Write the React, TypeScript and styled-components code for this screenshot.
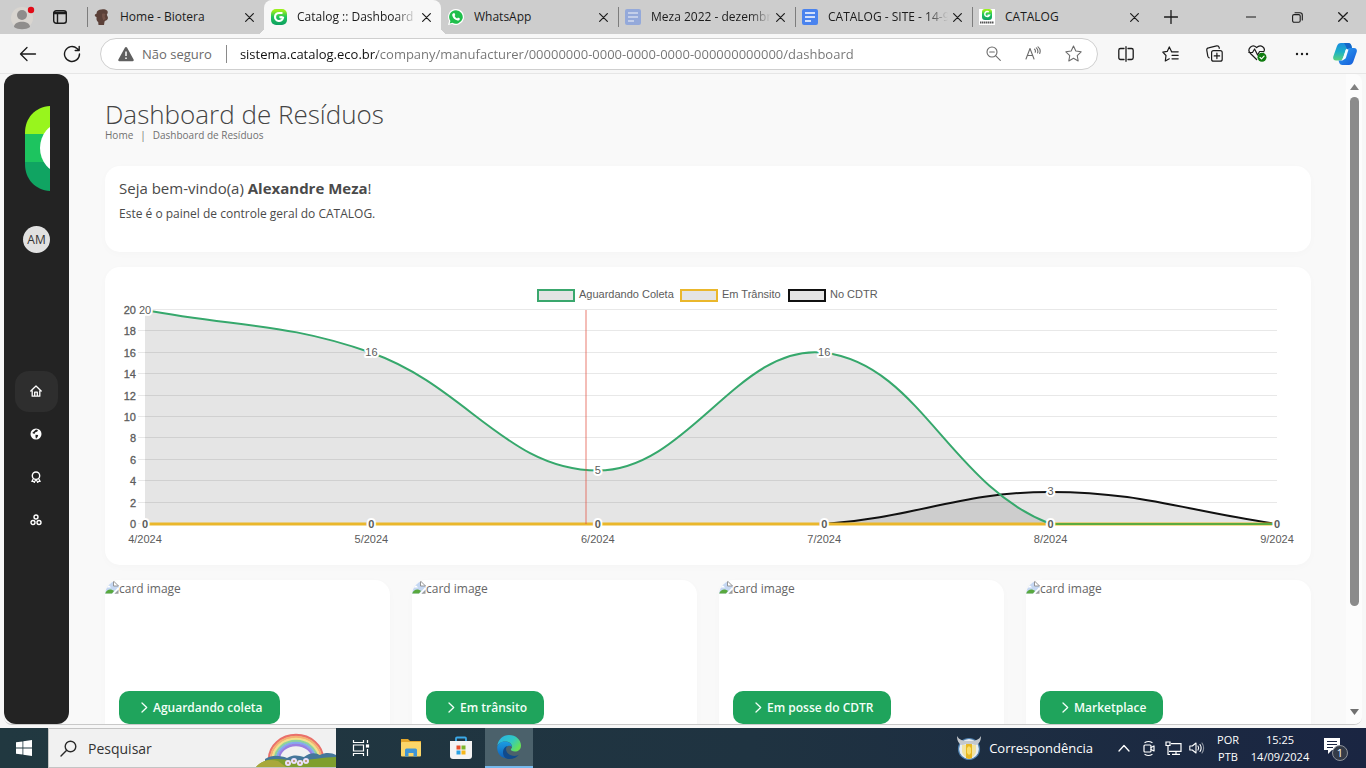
import React from 'react';
import styled, { createGlobalStyle } from 'styled-components';

const UI = '"Open Sans", "Noto Sans", sans-serif';
const CHART = '"Liberation Sans", Arial, sans-serif';

const GlobalStyle = createGlobalStyle`
  *, *::before, *::after { box-sizing: border-box; }
  html, body, #root { height: 100%; }
  body { margin: 0; background: #f7f7f7; font-family: ${UI}; overflow: hidden; }
  button, input { font: inherit; color: inherit; margin: 0; padding: 0; border: 0; background: none; }
  h1, h2, p { margin: 0; }
  a { color: inherit; text-decoration: none; }
  svg { display: block; flex: none; }
`;

const Screen = styled.div`
  display: flex;
  flex-direction: column;
  height: 100vh;
`;

/* ---------- browser tabs ---------- */
const TabStrip = styled.header`
  display: flex;
  height: 34px;
  flex: none;
  background: #cdcdcd;
  color: #1b1b1b;
`;
const StripTools = styled.div`
  display: flex;
  align-items: center;
  gap: 17px;
  width: 87px;
  padding-left: 10px;
  flex: none;
`;
const IconButton = styled.button<{ $w?: number }>`
  display: flex;
  align-items: center;
  justify-content: center;
  width: ${(p) => (p.$w ? `${p.$w}px` : 'auto')};
  flex: none;
`;
const TabItem = styled.div<{ $active?: boolean; $line?: boolean }>`
  display: flex;
  align-items: center;
  flex: 0 1 177px;
  min-width: 0;
  padding: 0 5px 0 6px;
  position: relative;
  background: ${(p) => (p.$active ? '#f7f7f7' : 'transparent')};
  border-radius: 8px 8px 0 0;
  &::before {
    content: '';
    width: 1px;
    height: 20px;
    margin-left: -6px;
    margin-right: 6px;
    background: ${(p) => (p.$line ? '#7d7d7d' : 'transparent')};
  }
  &::after {
    content: '';
    display: ${(p) => (p.$active ? 'block' : 'none')};
    position: absolute;
    left: -7px;
    right: -7px;
    bottom: 0;
    height: 7px;
    background:
      radial-gradient(circle at 0 0, transparent 7px, #f7f7f7 7px) left / 7px 7px no-repeat,
      radial-gradient(circle at 100% 0, transparent 7px, #f7f7f7 7px) right / 7px 7px no-repeat;
  }
`;
const TabLabel = styled.button`
  display: flex;
  align-items: center;
  gap: 10px;
  flex: 1;
  min-width: 0;
  font-size: 12px;
  line-height: 16px;
  text-align: left;
`;
const TabTitle = styled.span<{ $fade?: boolean }>`
  flex: 1;
  overflow: hidden;
  white-space: nowrap;
  mask-image: ${(p) => (p.$fade ? 'linear-gradient(90deg, #000 82%, transparent)' : 'none')};
`;
const WindowButtons = styled.div`
  display: flex;
  margin-left: auto;
`;

/* ---------- toolbar ---------- */
const Toolbar = styled.nav`
  display: flex;
  align-items: center;
  height: 40px;
  flex: none;
  background: #f7f7f7;
  border-bottom: 1px solid #e6e6e6;
  color: #1b1b1b;
`;
const NavGroup = styled.div`
  display: flex;
  width: 100px;
  padding-left: 6px;
  flex: none;
`;
const Address = styled.div`
  display: flex;
  align-items: center;
  flex: 1;
  height: 32px;
  padding: 0 4px 0 17px;
  background: #fff;
  border: 1px solid #cfcfcf;
  border-radius: 16px;
  font-size: 13px;
  line-height: 18px;
  color: #6b6b6b;
`;
const Secure = styled.button`
  display: flex;
  align-items: center;
  gap: 8px;
  padding-right: 14px;
  border-right: 1px solid #8a8a8a;
  white-space: nowrap;
`;
const UrlInput = styled.input`
  flex: 1;
  min-width: 0;
  margin-left: 13px;
  outline: none;
  background: linear-gradient(90deg, #111 137px, #737373 137px);
  background-clip: text;
  -webkit-text-fill-color: transparent;
`;
const ToolButtons = styled.div`
  display: flex;
  align-items: center;
  padding-left: 6px;
  flex: none;
`;

/* ---------- page ---------- */
const Viewport = styled.div`
  display: flex;
  flex: 1;
  min-height: 0;
  margin: 0 4px 3px;
  border-bottom: 1px solid #c9c9c9;
  border-radius: 8px;
  background: #f9f9f9;
  overflow: hidden;
`;
const Sidebar = styled.aside`
  display: flex;
  flex-direction: column;
  align-items: center;
  width: 65px;
  flex: none;
  padding-top: 32px;
  background: #232323;
  border-radius: 12px;
`;
const LogoLink = styled.a`
  padding-left: 2px;
`;
const Avatar = styled.button`
  width: 27px;
  height: 27px;
  margin-top: 35px;
  border-radius: 50%;
  background: #e1e1e1;
  color: #333;
  font-size: 12px;
  line-height: 27px;
`;
const SideNav = styled.nav`
  display: flex;
  flex-direction: column;
  gap: 2px;
  margin-top: 118px;
`;
const SideLink = styled.a<{ $active?: boolean }>`
  display: flex;
  align-items: center;
  justify-content: center;
  width: 43px;
  height: 41px;
  padding: 0 2px 2px 0;
  border-radius: 14px;
  color: #fff;
  background: ${(p) => (p.$active ? '#2e2e2e' : 'transparent')};
`;
const Main = styled.main`
  flex: 1;
  min-width: 0;
  padding: 25px 35px 0 36px;
  color: #4a4a4a;
  overflow: hidden;
`;
const Title = styled.h1`
  font-size: 26px;
  font-weight: 300;
  line-height: 30px;
  color: #444;
`;
const Crumbs = styled.nav`
  display: flex;
  gap: 7px;
  font-size: 10px;
  line-height: 12px;
  color: #707070;
`;
const Card = styled.section`
  background: #fff;
  border-radius: 15px;
  box-shadow: 0 2px 8px rgba(0, 0, 0, 0.02);
`;
const Welcome = styled(Card)`
  height: 86px;
  margin-top: 25px;
  padding: 12px 14px;
`;
const Greeting = styled.h2`
  font-size: 15px;
  font-weight: 400;
  line-height: 20px;
`;
const Intro = styled.p`
  margin-top: 6px;
  font-size: 12px;
  line-height: 20px;
`;
const ChartCard = styled(Card)`
  margin-top: 15px;
  overflow: hidden;
`;
const ChartSvg = styled.svg`
  width: 100%;
  height: auto;
  font-family: ${CHART};
  font-size: 11px;
  fill: #5c5c5c;
`;
const CardGrid = styled.div`
  display: grid;
  grid-template-columns: repeat(4, 1fr);
  gap: 22px;
  margin-top: 15px;
`;
const PhotoCard = styled(Card)`
  height: 200px;
  overflow: hidden;
`;
const Picture = styled.div`
  display: flex;
  height: 111px;
  font-size: 12px;
  line-height: 18px;
  color: #666;
`;
const CardButton = styled.button`
  display: flex;
  align-items: center;
  gap: 5px;
  height: 33px;
  margin-left: 14px;
  padding: 0 17px 0 22px;
  border-radius: 10px;
  background: #1fa45c;
  color: #f3fff8;
  font-size: 12px;
  font-weight: 600;
  white-space: nowrap;
`;
const ScrollTrack = styled.div`
  display: flex;
  flex-direction: column;
  align-items: center;
  width: 16px;
  flex: none;
  padding: 10px 0 9px;
  background: #fcfcfc;
`;
const Thumb = styled.div`
  width: 9px;
  flex: 0 1 509px;
  margin: 7px 0 auto;
  border-radius: 5px;
  background: #8b8b8b;
`;

/* ---------- taskbar ---------- */
const Taskbar = styled.footer`
  display: flex;
  align-items: stretch;
  height: 40px;
  flex: none;
  background: linear-gradient(90deg, #213840, #1f3341 55%, #1a2542);
  color: #fff;
`;
const TaskButton = styled.button<{ $active?: boolean; $w?: number }>`
  display: flex;
  align-items: center;
  justify-content: center;
  width: ${(p) => p.$w ?? 50}px;
  flex: none;
  background: ${(p) => (p.$active ? '#4b616b' : 'transparent')};
  border-bottom: ${(p) => (p.$active ? '2px solid #76b9ed' : '0')};
`;
const SearchBox = styled.label`
  display: flex;
  align-items: center;
  gap: 11px;
  width: 288px;
  flex: none;
  padding-left: 11px;
  background: #f1f1f1;
  border: 1px solid #c4c4c4;
  border-width: 1px 0 1px 1px;
  color: #2a2a2a;
  font-size: 14px;
`;
const SearchInput = styled.input`
  flex: 1;
  min-width: 0;
  outline: none;
  &::placeholder { color: #333; opacity: 1; }
`;
const Tray = styled.div`
  display: flex;
  align-items: center;
  margin-left: auto;
  padding-right: 7px;
`;
const News = styled.button`
  display: flex;
  align-items: center;
  gap: 8px;
  margin-right: 18px;
  font-size: 13px;
`;
const TrayText = styled.button<{ $w: number }>`
  width: ${(p) => p.$w}px;
  font-size: 11px;
  line-height: 17px;
  text-align: center;
`;

/* ---------- icons ---------- */
const line = { fill: 'none', stroke: 'currentColor', strokeLinecap: 'round', strokeLinejoin: 'round' } as const;

const CloseIcon = ({ size = 9 }: { size?: number }) => (
  <svg width={size} height={size} viewBox="0 0 10 10" {...line} strokeWidth="1.3"><path d="M.7.7l8.6 8.6M9.3.7L.7 9.3" /></svg>
);

const CatalogMark = ({ small }: { small?: boolean }) => (
  <svg width="16" height="16" viewBox="0 0 16 16">
    <defs><linearGradient id={small ? 'cms' : 'cm'} x1="0" y1="0" x2="0" y2="1"><stop offset="0.1" stopColor="#9af01c" /><stop offset="0.5" stopColor="#1fc45a" /><stop offset="1" stopColor="#0d9f62" /></linearGradient></defs>
    {small ? (
      <>
        <rect width="16" height="16" fill="#fff" />
        <rect x="3" width="10" height="11" rx="3" fill="url(#cms)" />
        <path d="M9.800 3A2.500 2.500 0 1 0 10.500 6.200H8.500" fill="none" stroke="#fff" strokeWidth="1.500" />
        <path d="M1 13.500h14" stroke="#555" strokeWidth="2" strokeDasharray="1.500 .5" />
      </>
    ) : (
      <>
        <rect width="16" height="16" rx="5" fill="url(#cm)" />
        <path d="M11.500 4H8a4 4 0 1 0 4 4.600C10.500 7.800 9.500 8 8.500 8.600" fill="none" stroke="#fff" strokeWidth="2.200" />
      </>
    )}
  </svg>
);

const MonkeyIcon = () => (
  <svg width="16" height="16" viewBox="0 0 16 16"><path d="M3 2.500C5 0 11-.3 13 1.500c1.300 1.300.7 3-.2 4.200.5 1.500 1.600 2.500.9 4.300-.7 1.700-3 1.400-3.200 2.800L10 16H4.500l-.3-3C2 11.500 2.600 9.500 2.500 8 .2 7.500.3 5 2.300 5z" fill="#5b4038" /><path d="M8 5c1.500-.8 3-.4 3.500.5L10.500 7l1.200 3-2.500 1.200L8.200 8z" fill="#735248" /></svg>
);
const WhatsIcon = () => (
  <svg width="16" height="16" viewBox="0 0 16 16"><path d="M8 0a8 8 0 1 1-3.900 15L0 16l1.100-4A8 8 0 0 1 8 0z" fill="#fff" /><path d="M8 1.200a6.800 6.800 0 1 1-3.600 12.600l-2.700.7.700-2.600A6.800 6.800 0 0 1 8 1.200z" fill="#1fbf4b" /><path d="M5.400 4.200l1-.1.9 2-.7 1c.6 1.100 1.300 1.800 2.500 2.300l.9-1 1.900 1c.1 1.300-1 2.200-2.300 2-2.800-.5-5-2.600-5.400-5.200-.1-.9.5-1.700 1.200-2z" fill="#fff" /></svg>
);
const DocIcon = ({ faded }: { faded?: boolean }) => (
  <svg width="16" height="16" viewBox="0 0 16 16"><rect width="16" height="16" rx="2" fill={faded ? '#94a9da' : '#4a83ee'} /><path d="M3 4h10M3 8h10M3 12h6" stroke={faded ? '#d4dbee' : '#fff'} strokeWidth="1.700" /></svg>
);
const ProfileIcon = () => (
  <svg width="26" height="28" viewBox="0 0 26 28"><circle cx="12" cy="15" r="11" fill="#d9d5d0" /><circle cx="12" cy="12" r="5" fill="#8f8d8c" /><path d="M4 24c0-7 16-7 16 0-4 3-12 3-16 0z" fill="#8f8d8c" /><circle cx="21" cy="7" r="3.200" fill="#e20a17" /></svg>
);
const WorkspaceIcon = () => (
  <svg width="14" height="14" viewBox="0 0 14 14" {...line} strokeWidth="1.400"><rect x=".7" y=".7" width="12.600" height="12.600" rx="2.500" /><path d="M1 2.500h12M1 3.500h12M4.500 4v9" /></svg>
);
const BackIcon = () => (
  <svg width="18" height="16" viewBox="0 0 18 16" {...line} strokeWidth="1.300"><path d="M16.500 8H1.500M8 1.500L1.500 8 8 14.500" /></svg>
);
const ReloadIcon = () => (
  <svg width="18" height="18" viewBox="0 0 18 18" {...line} strokeWidth="1.400"><path d="M16.500 9A7.500 7.500 0 1 1 14 3.400l2 1.900M16.200 1.500v4h-4" /></svg>
);
const WarnIcon = () => (
  <svg width="16" height="16" viewBox="0 0 16 16"><path d="M7 1.600c.4-.8 1.600-.8 2 0l6.600 12c.4.800 0 1.700-1 1.700H1.400c-1 0-1.400-.9-1-1.700z" fill="#5f5f5f" /><path d="M8 5.500v4.500M8 11.500v1.500" stroke="#fff" strokeWidth="1.500" /></svg>
);
const ZoomOutIcon = () => (
  <svg width="15" height="15" viewBox="0 0 15 15" {...line} strokeWidth="1.100"><circle cx="6" cy="6" r="5" /><path d="M9.800 9.800l4.500 4.500M3.700 6h4.600" /></svg>
);
const ReadIcon = () => (
  <svg width="16" height="15" viewBox="0 0 16 15" {...line} strokeWidth="1.100"><path d="M1 13L5 2.500 9 13M2.500 9.500h5M9.500 3.200c.9.800 1.100 2 .7 3M11.300 1.900c1.500 1.300 1.900 3.300 1.300 5M13 .8c2 1.700 2.600 4.500 1.700 6.700" /></svg>
);
const STAR = 'M8 1l2.200 4.700 5 .7-3.700 3.500.9 5.100L8 12.500 3.600 15l.9-5.100L.8 6.400l5-.7z';
const StarIcon = () => (
  <svg width="17" height="17" viewBox="0 0 16 16" {...line} strokeWidth="1"><path d={STAR} /></svg>
);
const SplitIcon = () => (
  <svg width="16" height="16" viewBox="0 0 16 16" {...line} strokeWidth="1.300"><path d="M6 2.500H2.500A1.700 1.700 0 0 0 .8 4.200v7.600a1.700 1.700 0 0 0 1.700 1.700H6M10 2.500h3.500a1.700 1.700 0 0 1 1.700 1.700v7.600a1.700 1.700 0 0 1-1.700 1.700H10M8 .7v14.600" /></svg>
);
const FavIcon = () => (
  <svg width="17" height="16" viewBox="0 0 17 16" {...line} strokeWidth="1.200"><path d="M9.500 5.500L7.300.9 5.200 5.400.8 6.100 4 9.500l-.7 5.500 4-2.200M9.500 5.800h6.700M10 9.300h6.200M10 12.800h6.200" /></svg>
);
const CollectIcon = () => (
  <svg width="17" height="17" viewBox="0 0 17 17" {...line} strokeWidth="1.200"><rect x="5.600" y="5.600" width="10.600" height="10.600" rx="2" /><path d="M10.900 8.200v5.400M8.200 10.900h5.400M3.200 12.800c-.8-.2-1.200-.8-1.400-1.600L.8 5.300C.6 4 1.200 3 2.500 2.800L10.700.9c1.200-.2 2.200.4 2.500 1.700l.1.700" /></svg>
);
const HealthIcon = () => (
  <svg width="20" height="17" viewBox="0 0 20 17" {...line} strokeWidth="1.200"><path d="M8.600 14.500L2.200 8.200C-1.400 4 4-1.600 8.600 2.500 13-1.600 18 3 15.700 6.800M.8 7.500h3.700L6.600 4l3 6 2-3.500h4" /><circle cx="14" cy="12.300" r="4.500" fill="#107c10" stroke="none" /><path d="M12 12.300l1.500 1.500 2.600-2.700" stroke="#fff" /></svg>
);
const DotsIcon = () => (
  <svg width="14" height="4" viewBox="0 0 14 4" fill="currentColor"><circle cx="2" cy="2" r="1.200" /><circle cx="7" cy="2" r="1.200" /><circle cx="12" cy="2" r="1.200" /></svg>
);
const CopilotIcon = () => (
  <svg width="24" height="24" viewBox="0 0 24 24">
    <defs>
      <linearGradient id="cpa" x1="0" y1="0" x2="0" y2="1"><stop offset="0" stopColor="#1a8be0" /><stop offset=".5" stopColor="#1cb0c6" /><stop offset="1" stopColor="#5bd37c" /></linearGradient>
      <linearGradient id="cpb" x1="0" y1="0" x2="1" y2="1"><stop offset="0" stopColor="#2ba2f2" /><stop offset="1" stopColor="#1557d8" /></linearGradient>
    </defs>
    <path d="M8 1h7c2 0 3 1 3.500 3L19 6h-3c-2 0-3 .8-3.600 2.800L10 16c-.6 2-1.700 2.500-3.500 2.500H3C.5 18.500-.3 16.500.3 14.500l3.500-10C4.600 2 6 1 8 1z" fill="url(#cpa)" />
    <path d="M11 1h4c2 0 3 1 3.500 3L19 7h-5c-1-2-1.500-4-3-6z" fill="#1466c8" />
    <path d="M16 23H9.500c-2 0-3-1-3.500-3l-.4-1.500H8c2 0 3-.8 3.600-2.800L14 8.500C14.600 6.500 15.700 6 17.500 6H21c2.500 0 3.300 2 2.700 4l-3.500 10c-.8 2-2.200 3-4.200 3z" fill="url(#cpb)" />
    <path d="M13 7.500h2.500L13 15.500c-.5 1.200-1.200 2-2.500 2H8.800c.8-.5 1.200-1.200 1.600-2.300l2-6c.2-.8.300-1.200.6-1.700z" fill="#f4fbff" />
  </svg>
);

const SideLogo = () => (
  <svg width="25" height="85" viewBox="0 0 25 85">
    <clipPath id="pill"><path d="M25 0v85C10 84 0 73 0 58V27C0 12 10 1 25 0z" /></clipPath>
    <g clipPath="url(#pill)">
      <rect width="25" height="28" fill="#98f51d" />
      <rect y="28" width="25" height="28" fill="#1dc45f" />
      <rect y="56" width="25" height="29" fill="#10a462" />
      <ellipse cx="37" cy="42" rx="22" ry="25" fill="#fff" />
    </g>
  </svg>
);
const HomeIcon = () => (
  <svg width="12" height="12" viewBox="0 0 12 12" {...line} strokeWidth="1.300"><path d="M.8 6L6 1l5.200 5M2.200 5.500v5.700h7.600V5.500M4.700 11V7.200h2.600V11" /></svg>
);
const GlobeIcon = () => (
  <svg width="12" height="12" viewBox="0 0 12 12"><circle cx="6" cy="6" r="5.500" fill="#fff" /><path d="M6 1.500l2 .5-.7 1.500L5 4.600l-.5 1.500L2.200 5M5.500 6.700l2.700.3-.6 2-1.600 1.700-.5-2z" fill="#232323" /></svg>
);
const BadgeIcon = () => (
  <svg width="12" height="12" viewBox="0 0 12 12" {...line} strokeWidth="1.400"><circle cx="6" cy="4.700" r="3.700" /><path d="M3.300 7.700L1.800 10.500l1.700-.2.800 1.200L5.700 8.700M8.700 7.700l1.500 2.800-1.700-.2-.8 1.200-1.400-2.800" strokeWidth="1.200" /></svg>
);
const TriIcon = () => (
  <svg width="12" height="12" viewBox="0 0 12 12" {...line} strokeWidth="1.400"><circle cx="6" cy="3" r="2" /><circle cx="3" cy="8.500" r="2" /><circle cx="9" cy="8.500" r="2" /></svg>
);
const BrokenImage = () => (
  <svg width="14" height="16" viewBox="0 0 14 16"><path d="M0 13.500V8c1-3 4-5.500 8-6.500l5.500 4V11l-3 2.500z" fill="#c5d7f2" /><path d="M8.500 1v5h5z" fill="#fff" stroke="#8b8b8b" strokeWidth=".9" /><path d="M1 7.500c.5-1.500 2-2 3.500-1.700L6 7.500z" fill="#fff" /><path d="M0 13.500c2-4.500 6-5 9-2.500l-2 2.500z" fill="#58a83e" /><path d="M8 14l5.500-6" stroke="#fff" strokeWidth="1.600" /><path d="M9.500 13.800h4V10z" fill="#9b9b9b" /></svg>
);
const Chevron = () => (
  <svg width="7" height="11" viewBox="0 0 7 11" {...line} strokeWidth="1.300"><path d="M1 1l4.700 4.500L1 10" /></svg>
);

const WindowsIcon = () => (
  <svg width="16" height="16" viewBox="0 0 16 16" fill="#fff"><path d="M0 2.300L6.500 1.400v6.200H0zM7.300 1.300L16 0v7.600H7.300zM0 8.400h6.500v6.200L0 13.700zM7.300 8.400H16V16l-8.700-1.300z" /></svg>
);
const SearchIcon = () => (
  <svg width="17" height="17" viewBox="0 0 17 17" {...line} strokeWidth="1.400"><circle cx="10.500" cy="6.500" r="5.300" /><path d="M6.700 10.300L1 16" /></svg>
);
const Rainbow = () => (
  <svg width="80" height="38" viewBox="0 0 80 38">
    {['#e9706a', '#f4b073', '#f2e08a', '#8fd49a', '#86a8ee', '#9a7fe0'].map((c, i) => (
      <path key={c} d={`M${13 + i * 2} 30A${27 - i * 2} ${24 - i * 2} 0 0 1 ${67 - i * 2} 30`} fill="none" stroke={c} strokeWidth="2.300" />
    ))}
    <path d="M9 30c8-5 16-3 22-1 8-4 12-2 17-1 8-6 13-3 16-2 6-3 12-2 16 0v12H9z" fill="#45779a" />
    <path d="M0 38c8-9 20-9 32-7 16 2 34-3 48-3v10z" fill="#7f9f2d" />
    <path d="M0 38c6-7 14-8 22-6l8 6z" fill="#a8a83a" />
    {[32, 38, 44, 50].map((x, i) => (
      <g key={x}><circle cx={x} cy={i % 2 ? 32 : 34} r="3" fill="#e9e0fb" /><circle cx={x} cy={i % 2 ? 32 : 34} r="1" fill="#b58a5a" /></g>
    ))}
  </svg>
);
const TaskViewIcon = () => (
  <svg width="18" height="16" viewBox="0 0 18 16" fill="none" stroke="#fff" strokeWidth="1.200"><path d="M1.500 0v2.500h10V0M1.500 16v-2.500h10V16M1.500 5h10v6h-10zM15.500 0v3M15.500 9v7" /><rect x="14.500" y="5" width="2" height="2" fill="#fff" /></svg>
);
const FolderIcon = () => (
  <svg width="22" height="18" viewBox="0 0 22 18"><path d="M1 0h7l2 2h11v5H1z" fill="#e5a72b" /><rect x="1" y="3" width="20" height="14.500" rx="1" fill="#fbd669" /><path d="M5 17.500V11q0-1.500 1.500-1.500h9Q17 9.500 17 11v6.500h-3.500V14h-5v3.500z" fill="#3f95d6" /></svg>
);
const StoreIcon = () => (
  <svg width="22" height="24" viewBox="0 0 22 24"><path d="M6 6V2.500q0-1 1-1h8q1 0 1 1V6" fill="none" stroke="#3ba9e8" strokeWidth="1.800" /><path d="M0 5h22v15q0 3-3 3H3q-3 0-3-3z" fill="#f4f4f4" /><path d="M6.500 9.500h4v4h-4z" fill="#e8502c" /><path d="M11.500 9.500h4v4h-4z" fill="#7cb52a" /><path d="M6.500 14.500h4v4h-4z" fill="#2ba2e4" /><path d="M11.500 14.500h4v4h-4z" fill="#f6b71b" /></svg>
);
const EdgeIcon = () => (
  <svg width="24" height="24" viewBox="0 0 24 24">
    <defs>
      <linearGradient id="ea" x1="0" y1="0" x2="1" y2=".6"><stop offset="0" stopColor="#28b0e8" /><stop offset=".6" stopColor="#30c8c4" /><stop offset="1" stopColor="#66e056" /></linearGradient>
      <linearGradient id="eb" x1="0" y1="0" x2="0" y2="1"><stop offset="0" stopColor="#1b9de2" /><stop offset="1" stopColor="#0f5fb8" /></linearGradient>
    </defs>
    <path d="M.3 11C1 4.500 6 0 12 0c7 0 12 5 12 10.500 0 4-3 6-6 6-3.500 0-4.500-1.500-4-2.500 1-1 1.200-2 1-3C14.500 8 11 6.500 8 6.500 4 6.500 1 9 .3 11z" fill="url(#ea)" />
    <path d="M.2 12C1 8.500 4.500 6.500 8 6.500c4 0 7 2.500 7 5.500-1-1-2.500-1.500-4-1-4 2-3.500 9 3 11-5 3-14 .5-13.800-10z" fill="url(#eb)" />
    <path d="M9 14c0 4 4 7 8.500 7 2 0 4-.7 5-2.200-2 3.500-6 5.200-10 5.200C7 24 5 19 6.500 14.500 7.500 12 9.500 11 11 11c-1 .5-2 1.500-2 3z" fill="#114a8b" />
  </svg>
);
const TeamIcon = () => (
  <svg width="24" height="24" viewBox="0 0 24 24"><circle cx="12" cy="13" r="10.500" fill="#e8edf2" stroke="#4c7fae" strokeWidth="1.200" /><path d="M5 9h14v6c0 4-4 6.500-7 7.500-3-1-7-3.500-7-7.500z" fill="#f1e3a0" /><path d="M9 8h6v14l-3 1-3-1z" fill="#e8b820" /><path d="M0 0c2 4 6 5 12 5s10-1 12-5c0 5-2 8-5 9-4-1.500-10-1.500-14 0C2 8 0 5 0 0z" fill="#c4c8cc" /><path d="M10 12l2-2 2 2v5l-2 2-2-2z" fill="#f9dd6a" /></svg>
);
const CamIcon = () => (
  <svg width="12" height="17" viewBox="0 0 12 17" {...line} strokeWidth="1.200"><rect x="1" y="5" width="7" height="7" rx="1" /><path d="M8 7.500l3-1.500v5L8 9.500M2 2.500q3.500-2 7 0M2 14.500q3.500 2 7 0" /></svg>
);
const NetIcon = () => (
  <svg width="17" height="15" viewBox="0 0 17 15" fill="none" stroke="#fff" strokeWidth="1.200"><path d="M6 2.600h10v7.800H4M7 13.400h8M11 10.500v3M1 1h4v3.500H1zM3 4.500v9h2" /></svg>
);
const VolIcon = () => (
  <svg width="17" height="14" viewBox="0 0 17 14" {...line} strokeWidth="1.100"><path d="M.8 5v4h2.500L7 12V2L3.300 5zM9 5q1.300 2 0 4M11 3.500q2.300 3.500 0 7" /><path d="M13 2q3.300 5 0 10" opacity=".5" /></svg>
);
const NoteIcon = () => (
  <svg width="26" height="26" viewBox="0 0 26 26"><path d="M1 3h16v12h-8l-4 4v-4H1z" fill="#fff" /><path d="M4 6.500h10M4 9.500h10M4 12.500h6" stroke="#1a2542" strokeWidth="1.200" /><circle cx="17" cy="18" r="7.500" fill="#343b48" stroke="#8d929b" /><text x="17" y="22" textAnchor="middle" fontSize="11" fill="#fff">1</text></svg>
);

/* ---------- chart ---------- */
type Pt = { x: number; y: number };
const LEFT = 40;
const RIGHT = 1172;
const TOP = 43;
const BOTTOM = 257;
const months = ['4/2024', '5/2024', '6/2024', '7/2024', '8/2024', '9/2024'];
const stepX = (RIGHT - LEFT) / (months.length - 1);
const toY = (v: number) => BOTTOM - (v * (BOTTOM - TOP)) / 20;
const clampY = (y: number) => Math.max(TOP, Math.min(BOTTOM, y));
const waiting = [20, 16, 5, 16, 0, 0];
const transit = [0, 0, 0, 0, 0, 0];
const cdtr = [0, 0, 0, 0, 3, 0];

/* Smooth line through the values, with control points kept inside the plot. */
function curve(values: number[]): string {
  const pts: Pt[] = values.map((v, i) => ({ x: LEFT + i * stepX, y: toY(v) }));
  const ctrl = pts.map((cur, i) => {
    const prev = pts[i - 1] ?? cur;
    const next = pts[i + 1] ?? cur;
    const d01 = Math.hypot(cur.x - prev.x, cur.y - prev.y);
    const d12 = Math.hypot(next.x - cur.x, next.y - cur.y);
    const fa = (0.4 * d01) / (d01 + d12);
    const fb = (0.4 * d12) / (d01 + d12);
    return {
      before: { x: cur.x - fa * (next.x - prev.x), y: clampY(cur.y - fa * (next.y - prev.y)) },
      after: { x: cur.x + fb * (next.x - prev.x), y: clampY(cur.y + fb * (next.y - prev.y)) },
    };
  });
  return pts
    .map((p, i) => {
      if (i === 0) return `M${p.x} ${p.y}`;
      const a = ctrl[i - 1].after;
      const b = ctrl[i].before;
      return `C${a.x} ${a.y} ${b.x} ${b.y} ${p.x} ${p.y}`;
    })
    .join('');
}
const area = (values: number[]) => `${curve(values)}L${RIGHT} ${BOTTOM}L${LEFT} ${BOTTOM}Z`;

const legend = [
  { x: 432, color: '#3aa76d', label: 'Aguardando Coleta' },
  { x: 575, color: '#eab72c', label: 'Em Trânsito' },
  { x: 683, color: '#111', label: 'No CDTR' },
];

/* One label per distinct value at each month, so equal values do not stack. */
const labels = months.flatMap((_, i) =>
  [...new Set([waiting[i], transit[i], cdtr[i]])].map((value) => ({ i, value })),
);

const Chart = () => (
  <ChartSvg viewBox="0 0 1206 298" role="img" aria-label="Resíduos por mês">
    {legend.map((l) => (
      <g key={l.label}>
        <rect x={l.x + 1} y="23" width="36" height="11" fill="#e4e4e4" stroke={l.color} strokeWidth="2" />
        <text x={l.x + 42} y="31">{l.label}</text>
      </g>
    ))}
    {Array.from({ length: 11 }, (_, i) => i * 2).map((v) => (
      <g key={v}>
        <path d={`M33 ${Math.round(toY(v)) - 0.5}H${RIGHT}`} stroke="#e8e8e8" />
        <text x="31" y={Math.round(toY(v)) + 4} textAnchor="end" stroke="#5c5c5c" strokeWidth="0.3">{v}</text>
      </g>
    ))}
    <path d={area(cdtr)} fill="rgba(0,0,0,0.1)" />
    <path d={area(waiting)} fill="rgba(0,0,0,0.1)" />
    <path d={curve(cdtr)} fill="none" stroke="#111" strokeWidth="2" />
    <path d={curve(transit)} fill="none" stroke="#eab72c" strokeWidth="3" />
    <path d={curve(waiting)} fill="none" stroke="#36a86c" strokeWidth="2" />
    <path d={`M${LEFT + 4 * stepX} ${BOTTOM}H${RIGHT}`} stroke="#5cab3e" strokeWidth="2" />
    <path d={`M481 ${TOP}V${BOTTOM}`} stroke="rgba(228,80,66,0.5)" strokeWidth="1.500" />
    <g textAnchor="middle" stroke="#fff" strokeWidth="4" strokeLinejoin="round" paintOrder="stroke">
      {labels.map(({ i, value }) => (
        <text key={`${i}-${value}`} x={LEFT + i * stepX} y={Math.floor(toY(value)) + 4} fontWeight={value === 0 ? 700 : 400}>
          {value}
        </text>
      ))}
    </g>
    {months.map((m, i) => (
      <text key={m} x={LEFT + i * stepX} y="276" textAnchor="middle">{m}</text>
    ))}
  </ChartSvg>
);

const tabs = [
  { title: 'Home - Biotera', icon: <MonkeyIcon />, lineBefore: true },
  { title: 'Catalog :: Dashboard de Resíduos', icon: <CatalogMark />, active: true, fade: true },
  { title: 'WhatsApp', icon: <WhatsIcon /> },
  { title: 'Meza 2022 - dezembro', icon: <DocIcon faded />, lineBefore: true, fade: true },
  { title: 'CATALOG - SITE - 14-9-24', icon: <DocIcon />, lineBefore: true, fade: true },
  { title: 'CATALOG', icon: <CatalogMark small />, lineBefore: true },
];

export default function App() {
  return (
    <Screen>
      <GlobalStyle />
      <TabStrip>
        <StripTools>
          <IconButton aria-label="Perfil"><ProfileIcon /></IconButton>
          <IconButton aria-label="Guias"><WorkspaceIcon /></IconButton>
        </StripTools>
        {tabs.map((t) => (
          <TabItem key={t.title} $active={t.active} $line={t.lineBefore}>
            <TabLabel>
              {t.icon}
              <TabTitle $fade={t.fade}>{t.title}</TabTitle>
            </TabLabel>
            <IconButton $w={19} aria-label={`Fechar ${t.title}`}><CloseIcon /></IconButton>
          </TabItem>
        ))}
        <IconButton $w={44} aria-label="Nova guia">
          <svg width="14" height="14" viewBox="0 0 14 14" {...line} strokeWidth="1.300"><path d="M7 .5v13M.5 7h13" /></svg>
        </IconButton>
        <WindowButtons>
          <IconButton $w={46} aria-label="Minimizar">
            <svg width="10" height="2" viewBox="0 0 10 2" {...line}><path d="M0 1h10" /></svg>
          </IconButton>
          <IconButton $w={46} aria-label="Restaurar">
            <svg width="11" height="11" viewBox="0 0 11 11" {...line} strokeWidth="1.100"><rect x=".6" y="2.600" width="7.600" height="7.600" rx="1.500" /><path d="M3 .7h5A2.300 2.300 0 0 1 10.300 3v5" /></svg>
          </IconButton>
          <IconButton $w={46} aria-label="Fechar janela"><CloseIcon size={10} /></IconButton>
        </WindowButtons>
      </TabStrip>

      <Toolbar>
        <NavGroup>
          <IconButton $w={44} aria-label="Voltar"><BackIcon /></IconButton>
          <IconButton $w={44} aria-label="Atualizar"><ReloadIcon /></IconButton>
        </NavGroup>
        <Address>
          <Secure><WarnIcon />Não seguro</Secure>
          <UrlInput
            aria-label="Endereço"
            defaultValue="sistema.catalog.eco.br/company/manufacturer/00000000-0000-0000-0000-000000000000/dashboard"
          />
          <IconButton $w={40} aria-label="Zoom"><ZoomOutIcon /></IconButton>
          <IconButton $w={40} aria-label="Ler em voz alta"><ReadIcon /></IconButton>
          <IconButton $w={40} aria-label="Favoritar"><StarIcon /></IconButton>
        </Address>
        <ToolButtons>
          <IconButton $w={44} aria-label="Dividir tela"><SplitIcon /></IconButton>
          <IconButton $w={44} aria-label="Favoritos"><FavIcon /></IconButton>
          <IconButton $w={44} aria-label="Coleções"><CollectIcon /></IconButton>
          <IconButton $w={44} aria-label="Desempenho"><HealthIcon /></IconButton>
          <IconButton $w={44} aria-label="Mais"><DotsIcon /></IconButton>
          <IconButton $w={42} aria-label="Copilot"><CopilotIcon /></IconButton>
        </ToolButtons>
      </Toolbar>

      <Viewport>
        <Sidebar>
          <LogoLink href="#" aria-label="Catalog"><SideLogo /></LogoLink>
          <Avatar>AM</Avatar>
          <SideNav>
            <SideLink href="#" $active aria-label="Início"><HomeIcon /></SideLink>
            <SideLink href="#" aria-label="Mundo"><GlobeIcon /></SideLink>
            <SideLink href="#" aria-label="Certificados"><BadgeIcon /></SideLink>
            <SideLink href="#" aria-label="Grupos"><TriIcon /></SideLink>
          </SideNav>
        </Sidebar>
        <Main>
          <Title>Dashboard de Resíduos</Title>
          <Crumbs><a href="#">Home</a><span>|</span><span>Dashboard de Resíduos</span></Crumbs>
          <Welcome>
            <Greeting>Seja bem-vindo(a) <strong>Alexandre Meza</strong>!</Greeting>
            <Intro>Este é o painel de controle geral do CATALOG.</Intro>
          </Welcome>
          <ChartCard><Chart /></ChartCard>
          <CardGrid>
            {['Aguardando coleta', 'Em trânsito', 'Em posse do CDTR', 'Marketplace'].map((label) => (
              <PhotoCard key={label}>
                <Picture><BrokenImage />card image</Picture>
                <CardButton><Chevron />{label}</CardButton>
              </PhotoCard>
            ))}
          </CardGrid>
        </Main>
        <ScrollTrack>
          <svg width="9" height="6" viewBox="0 0 9 6" fill="#808080"><path d="M0 6l4.500-6L9 6z" /></svg>
          <Thumb />
          <svg width="9" height="6" viewBox="0 0 9 6" fill="#707070"><path d="M0 0l4.500 6L9 0z" /></svg>
        </ScrollTrack>
      </Viewport>

      <Taskbar>
        <TaskButton $w={48} aria-label="Iniciar"><WindowsIcon /></TaskButton>
        <SearchBox>
          <SearchIcon />
          <SearchInput placeholder="Pesquisar" aria-label="Pesquisar" />
          <Rainbow />
        </SearchBox>
        <TaskButton aria-label="Visão de tarefas"><TaskViewIcon /></TaskButton>
        <TaskButton aria-label="Explorador"><FolderIcon /></TaskButton>
        <TaskButton $w={49} aria-label="Loja"><StoreIcon /></TaskButton>
        <TaskButton $w={48} $active aria-label="Edge"><EdgeIcon /></TaskButton>
        <Tray>
          <News><TeamIcon />Correspondência</News>
          <IconButton $w={26} aria-label="Ícones ocultos">
            <svg width="12" height="8" viewBox="0 0 12 8" {...line} strokeWidth="1.300"><path d="M1 7l5-5.500L11 7" /></svg>
          </IconButton>
          <IconButton $w={24} aria-label="Câmera"><CamIcon /></IconButton>
          <IconButton $w={24} aria-label="Rede"><NetIcon /></IconButton>
          <IconButton $w={24} aria-label="Volume"><VolIcon /></IconButton>
          <TrayText $w={38}>POR<br />PTB</TrayText>
          <TrayText $w={66}>15:25<br />14/09/2024</TrayText>
          <IconButton $w={46} aria-label="Notificações"><NoteIcon /></IconButton>
        </Tray>
      </Taskbar>
    </Screen>
  );
}
